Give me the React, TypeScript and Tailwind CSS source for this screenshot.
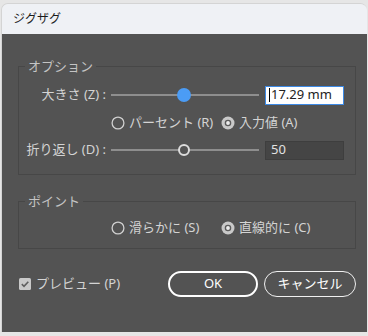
const Radio = ({ checked }: { checked?: boolean }) => (
  <svg width="14" height="14" viewBox="0 0 14 14" className="shrink-0">
    {checked ? (
      <>
        <circle cx="7" cy="7" r="6.5" fill="#c9c9c9" />
        <circle cx="7" cy="7" r="2.6" fill="#ededed" stroke="#5c5c5c" strokeWidth="1.4" />
      </>
    ) : (
      <circle cx="7" cy="7" r="5.9" fill="none" stroke="#d0d0d0" strokeWidth="1.3" />
    )}
  </svg>
)

const Slider = ({ filled }: { filled?: boolean }) => (
  <div className="relative h-[20px] w-[148px] shrink-0">
    <div className="absolute left-0 right-0 top-[9px] h-[2px] bg-[#8e8e8e]" />
    {filled ? (
      <div className="absolute left-[66px] top-[3px] h-[14px] w-[14px] rounded-full bg-[#4b9cf5]" />
    ) : (
      <div className="absolute left-[67px] top-[4px] h-[12px] w-[12px] rounded-full border-2 border-[#dcdcdc] bg-[#535353]" />
    )}
  </div>
)

const RadioPair = ({ left, right }: { left: string; right: string }) => (
  <div className="flex h-[20px] items-center pl-[92px]">
    <div className="flex w-[110px] shrink-0 items-center">
      <Radio />
      <span className="ml-[4px] whitespace-nowrap">{left}</span>
    </div>
    <div className="flex items-center">
      <Radio checked />
      <span className="ml-[4px] whitespace-nowrap">{right}</span>
    </div>
  </div>
)

export default function App() {
  return (
    <div
      className="h-[336px] w-[368px] overflow-hidden bg-[#e6e6e6] pl-[1px] pt-[3px]"
      style={{ fontFamily: '"Noto Sans", "Noto Sans CJK JP", sans-serif' }}
    >
      <div className="flex h-[329px] w-[366px] flex-col overflow-hidden rounded-t-[7px] border-l border-t border-[#d4d4d4]">
        <div className="flex h-[30px] shrink-0 items-center bg-[#eff1f5] pl-[11px] text-[12px] text-[#1b1b1b]">
          ジグザグ
        </div>
        <div className="flex flex-1 flex-col bg-[#535353] pl-[16px] pt-[23px] text-[13px] text-[#d4d4d4]">
          <fieldset className="w-[338px] border border-[#474747] pb-[14px] pl-0 pt-[10px]">
            <legend className="ml-[6px] px-[3px] leading-[18px] text-[#c4c4c4]">オプション</legend>
            <div className="flex flex-col gap-[7.5px]">
              <div className="flex h-[20px] items-center">
                <div className="w-[88px] shrink-0 whitespace-nowrap pr-[1px] text-right">大きさ (Z) :</div>
                <div className="ml-[4px]"><Slider filled /></div>
                <div className="ml-[6px] flex h-[19px] w-[79px] items-center border-[1.5px] border-[#3d8ae6] bg-white pl-[3px] text-[#222]">
                  <span className="mr-[1px] h-[14px] w-[1px] bg-black" />
                  17.29 mm
                </div>
              </div>
              <RadioPair left="パーセント (R)" right="入力値 (A)" />
              <div className="flex h-[20px] items-center">
                <div className="w-[88px] shrink-0 whitespace-nowrap pr-[1px] text-right">折り返し (D) :</div>
                <div className="ml-[4px]"><Slider /></div>
                <div className="ml-[6px] flex h-[19px] w-[79px] items-center border border-[#3e3e3e] bg-[#454545] pl-[5px] text-[#e2e2e2]">
                  50
                </div>
              </div>
            </div>
          </fieldset>
          <fieldset className="mt-[17px] w-[338px] border border-[#474747] pb-[10px] pt-[8px]">
            <legend className="ml-[6px] px-[3px] leading-[18px] text-[#c4c4c4]">ポイント</legend>
            <RadioPair left="滑らかに (S)" right="直線的に (C)" />
          </fieldset>
          <div className="mt-[22px] flex h-[26px] w-[338px] items-center">
            <svg width="12" height="12" viewBox="0 0 12 12" className="ml-[1px] shrink-0">
              <rect x="0" y="0" width="12" height="12" rx="1.5" fill="#c9c9c9" />
              <path d="M2.8 6.2 L5 8.3 L9.3 3.7" fill="none" stroke="#5f5f5f" strokeWidth="1.6" />
            </svg>
            <span className="ml-[5px]">プレビュー (P)</span>
            <button className="ml-auto flex h-[26px] w-[90px] items-center justify-center rounded-full border-2 border-white text-[13px] text-white">
              OK
            </button>
            <button className="ml-[6px] flex h-[26px] w-[92px] items-center justify-center rounded-full border-[1.5px] border-[#f0f0f0] text-[13px] text-white">
              キャンセル
            </button>
          </div>
        </div>
      </div>
    </div>
  )
}
